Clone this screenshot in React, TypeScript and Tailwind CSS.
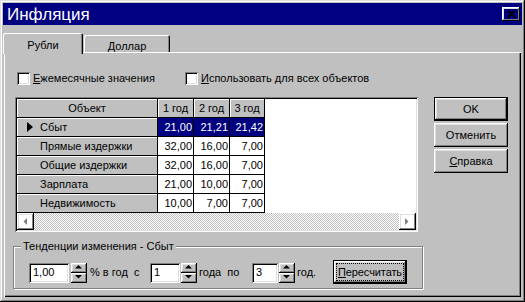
import React from "react";

const raised =
  "shadow-[inset_-1px_-1px_#000,inset_1px_1px_#fff,inset_-2px_-2px_#808080,inset_2px_2px_#dfdfdf]";
const sunken =
  "shadow-[inset_1px_1px_#808080,inset_-1px_-1px_#fff,inset_2px_2px_#000,inset_-2px_-2px_#dfdfdf]";

const rows = [
  { name: "Сбыт", v: ["21,00", "21,21", "21,42"], sel: true },
  { name: "Прямые издержки", v: ["32,00", "16,00", "7,00"] },
  { name: "Общие издержки", v: ["32,00", "16,00", "7,00"] },
  { name: "Зарплата", v: ["21,00", "10,00", "7,00"] },
  { name: "Недвижимость", v: ["10,00", "7,00", "7,00"] },
];
const colW = ["w-[36px]", "w-[36px]", "w-[35px]"];

function Check({ label, u }: { label: string; u: string }) {
  return (
    <div className="flex items-center gap-[3px]">
      <div className={`w-[13px] h-[13px] bg-white ${sunken}`} />
      <span>
        <span className="underline">{u}</span>
        {label}
      </span>
    </div>
  );
}

function Btn({ children, def }: { children: React.ReactNode; def?: boolean }) {
  const inner = (
    <div className={`flex h-full w-full items-center justify-center ${raised}`}>{children}</div>
  );
  if (def) return <div className="h-[24px] w-[74px] border border-black">{inner}</div>;
  return <div className="h-[24px] w-[74px]">{inner}</div>;
}

function Tri({ dir, disabled }: { dir: "l" | "r" | "u" | "d"; disabled?: boolean }) {
  const pts = {
    l: "4,0 4,7 0.5,3.5",
    r: "0,0 0,7 3.5,3.5",
    u: "0,3.5 7,3.5 3.5,0",
    d: "0,0 7,0 3.5,3.5",
  }[dir];
  const w = dir === "l" || dir === "r" ? 5 : 8;
  const h = dir === "l" || dir === "r" ? 8 : 5;
  return (
    <svg width={w} height={h} viewBox={`0 0 ${w} ${h}`}>
      {disabled && <polygon points={pts} fill="#fff" transform="translate(1,1)" />}
      <polygon points={pts} fill={disabled ? "#808080" : "#000"} />
    </svg>
  );
}

function Spin() {
  return (
    <div className="flex h-[20px] w-[16px] flex-col">
      <div className={`flex h-[10px] items-center justify-center ${raised}`}>
        <Tri dir="u" />
      </div>
      <div className={`flex h-[10px] items-center justify-center ${raised}`}>
        <Tri dir="d" />
      </div>
    </div>
  );
}

function Edit({ w, value }: { w: string; value: string }) {
  return (
    <div className={`${w} h-[20px] bg-white pl-[4px] flex items-center ${sunken}`}>{value}</div>
  );
}

export default function App() {
  return (
    <div
      className="w-[525px] h-[302px] bg-[#c0c0c0] p-[3px] flex flex-col text-[11px] text-black font-['Liberation_Sans',Arial,sans-serif] shadow-[inset_-1px_-1px_#000,inset_1px_1px_#dfdfdf,inset_-2px_-2px_#808080,inset_2px_2px_#fff] select-none"
    >
      {/* title */}
      <div className="h-[22px] bg-[#000080] flex items-center justify-between pl-[4px] pr-[2px]">
        <span className="text-white text-[17px] leading-none">Инфляция</span>
        <div className={`w-[18px] h-[14px] flex items-center justify-center ${raised}`}>
          <svg width="9" height="8" viewBox="0 0 9 8">
            <path d="M1 0.5 L8 7.5 M8 0.5 L1 7.5" stroke="#000" strokeWidth="2" />
          </svg>
        </div>
      </div>

      {/* tabs */}
      <div className="mt-[8px] flex items-end h-[19px]">
        <div className="relative z-10 -mb-[2px] h-[21px] w-[80px] bg-[#c0c0c0] rounded-t-[2px] flex justify-center pt-[4px] shadow-[inset_1px_1px_#fff,inset_-1px_0_#000,inset_-2px_0_#808080]">
          Рубли
        </div>
        <div className="ml-[1px] h-[17px] w-[86px] rounded-t-[2px] flex justify-center pt-[3px] shadow-[inset_1px_1px_#fff,inset_-1px_0_#000,inset_-2px_0_#808080]">
          Доллар
        </div>
      </div>

      {/* page */}
      <div className="ml-[1px] mr-[1px] mb-[2px] flex-1 flex flex-col shadow-[inset_1px_1px_#fff,inset_-1px_-1px_#000,inset_-2px_-2px_#808080]">
        <div className="mt-[20px] ml-[13px] flex items-center h-[13px]">
          <div className="w-[168px]">
            <Check u="Е" label="жемесячные значения" />
          </div>
          <Check u="И" label="спользовать для всех объектов" />
        </div>

        <div className="mt-[12px] flex">
          {/* grid */}
          <div className={`ml-[11px] w-[403px] h-[135px] bg-white p-[2px] flex flex-col ${sunken}`}>
            <div className="flex-1">
              <div className="flex h-[19px]">
                <div className="w-[141px] border-r border-b border-black bg-[#c0c0c0] shadow-[inset_1px_1px_#fff] flex items-center justify-center">
                  Объект
                </div>
                {["1 год", "2 год", "3 год"].map((h, i) => (
                  <div
                    key={h}
                    className={`${colW[i]} border-r border-b border-black bg-[#c0c0c0] shadow-[inset_1px_1px_#fff] flex items-center justify-center`}
                  >
                    {h}
                  </div>
                ))}
              </div>
              {rows.map((r) => (
                <div key={r.name} className="flex h-[19px]">
                  <div className="w-[141px] border-r border-b border-black bg-[#c0c0c0] shadow-[inset_1px_1px_#fff] flex items-center">
                    <div className="w-[23px] flex justify-center pl-[2px]">
                      {r.sel && (
                        <svg width="6" height="10" viewBox="0 0 6 10">
                          <polygon points="0,0 6,5 0,10" fill="#000" />
                        </svg>
                      )}
                    </div>
                    {r.name}
                  </div>
                  {r.v.map((v, i) => (
                    <div
                      key={i}
                      className={`${colW[i]} border-r border-b border-black flex items-center justify-end pr-[1px] ${
                        r.sel ? "bg-[#000080] text-white" : "bg-white"
                      }`}
                    >
                      {v}
                    </div>
                  ))}
                </div>
              ))}
            </div>
            <div className="flex h-[17px]">
              <div className={`w-[17px] flex items-center justify-center ${raised}`}>
                <Tri dir="l" disabled />
              </div>
              <div className="flex-1 bg-[image:repeating-conic-gradient(#c0c0c0_0%_25%,#fff_0%_50%)] bg-[length:2px_2px]" />
              <div className={`w-[17px] flex items-center justify-center ${raised}`}>
                <Tri dir="r" disabled />
              </div>
            </div>
          </div>

          {/* buttons */}
          <div className="ml-[16px] flex flex-col gap-[2px]">
            <Btn def>OK</Btn>
            <Btn>Отменить</Btn>
            <Btn>
              <span>
                <span className="underline">С</span>правка
              </span>
            </Btn>
          </div>
        </div>

        {/* group */}
        <div className="relative mt-[14px] ml-[9px] w-[410px] h-[43px] border border-[#808080] shadow-[inset_1px_1px_#fff,1px_1px_#fff]">
          <span className="absolute -top-[8px] left-[7px] px-[2px] bg-[#c0c0c0] leading-[14px]">
            Тенденции изменения - Сбыт
          </span>
          <div className="mt-[14px] ml-[15px] flex items-center">
            <Edit w="w-[40px]" value="1,00" />
            <div className="ml-[2px]">
              <Spin />
            </div>
            <span className="w-[63px] pl-[3px] whitespace-pre">% в год  с</span>
            <Edit w="w-[30px]" value="1" />
            <div className="ml-[1px]">
              <Spin />
            </div>
            <span className="w-[55px] pl-[2px] whitespace-pre">года  по</span>
            <Edit w="w-[26px]" value="3" />
            <div className="ml-[1px]">
              <Spin />
            </div>
            <span className="w-[38px] pl-[2px]">год.</span>
            <div className="h-[24px] w-[74px] border border-black -mt-[1px]">
              <div className={`flex h-full w-full items-center justify-center p-[2px] ${raised}`}>
                <div className="w-full h-full border border-dotted border-black flex items-center justify-center">
                  <span className="tracking-[-0.1px]">
                    <span className="underline">П</span>ересчитать
                  </span>
                </div>
              </div>
            </div>
          </div>
        </div>
      </div>
    </div>
  );
}
